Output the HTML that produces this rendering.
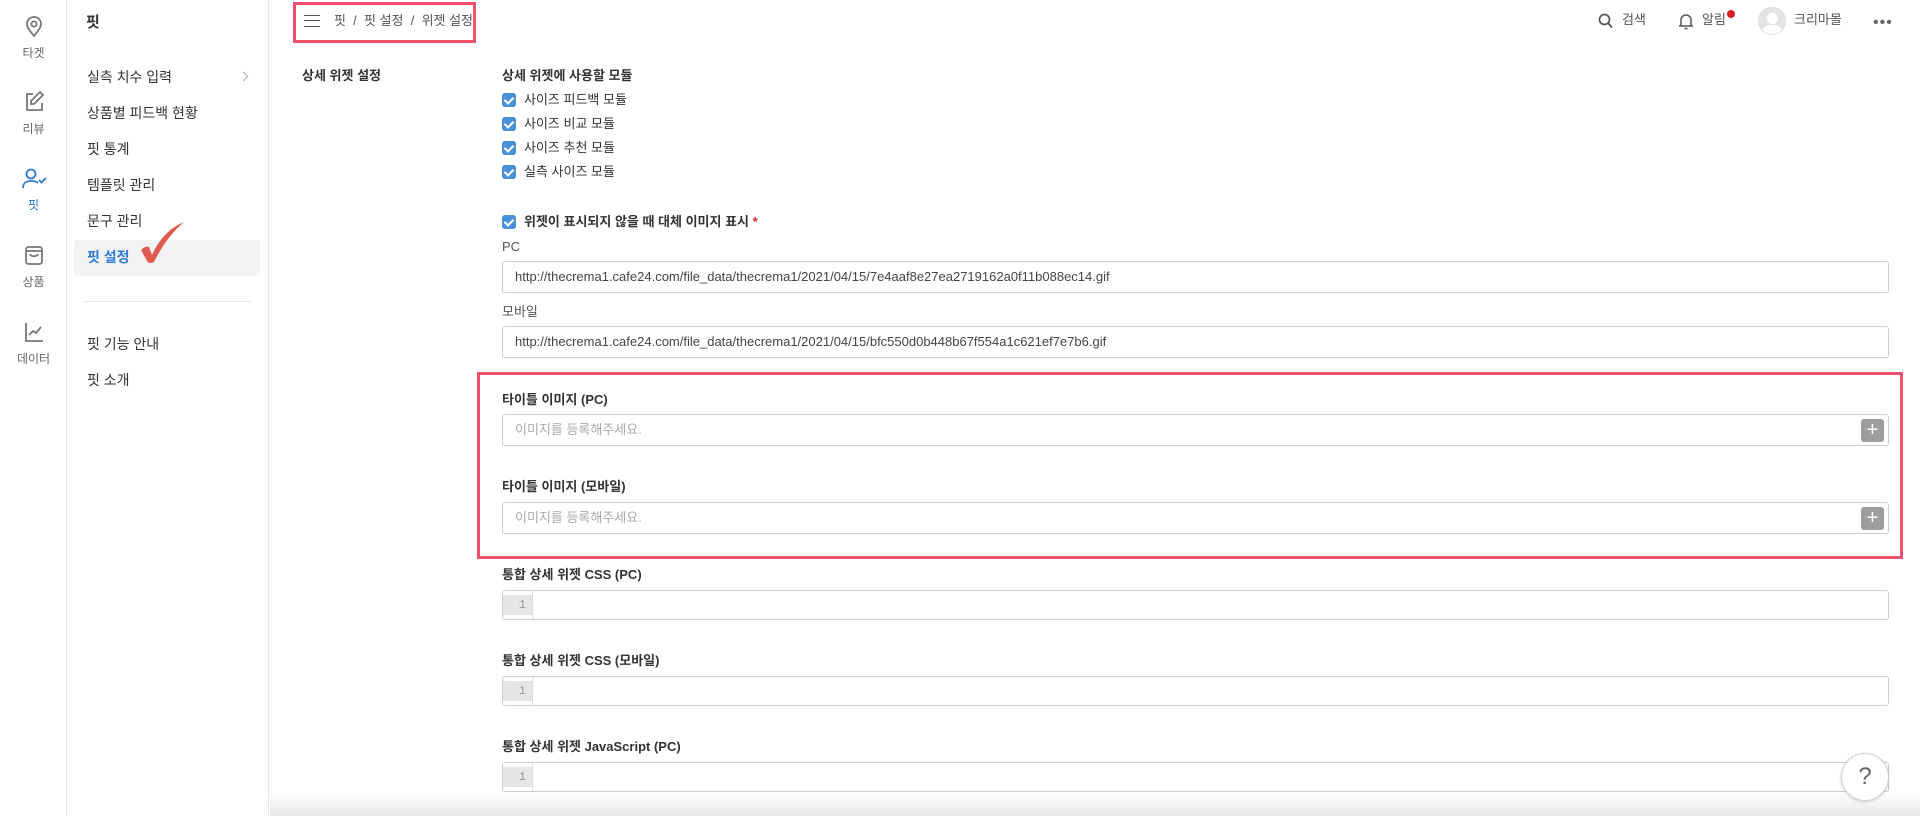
<!DOCTYPE html>
<html><head><meta charset="utf-8">
<style>
*{box-sizing:border-box;margin:0;padding:0}
body{width:1920px;height:816px;overflow:hidden;background:#fff;font-family:"Liberation Sans","Noto Sans CJK KR",sans-serif;color:#333;position:relative}
.abs{position:absolute}
.rail{left:0;top:0;width:67px;height:816px;border-right:1px solid #e8e8e8}
.ri{position:absolute;left:0;width:67px;text-align:center;font-size:12px;color:#666}
.ri svg{display:block;margin:0 auto 6px}
.side{left:67px;top:0;width:202px;height:816px;border-right:1px solid #e8e8e8}
.mi{position:absolute;left:20px;font-size:14px;color:#333;line-height:20px}
.t{position:absolute;font-size:13px;line-height:18px;white-space:nowrap}
.b{font-weight:bold;color:#333}
.cb{position:absolute;width:14px;height:14px;border-radius:3px;background:#4a8fd9}
.cb:after{content:"";position:absolute;left:4px;top:2px;width:4px;height:7px;border:solid #fff;border-width:0 2px 2px 0;transform:rotate(45deg)}
.inp{position:absolute;left:502px;width:1387px;border:1px solid #ccc;border-radius:3px;font-size:13px;padding-left:12px;color:#444;background:#fff}
.plus{position:absolute;right:4px;top:4px;width:23px;height:23px;background:#9e9e9e;border-radius:3px;color:#fff;font-size:20px;line-height:22px;text-align:center}
.code{position:absolute;left:502px;width:1387px;height:30px;border:1px solid #ccc;border-radius:3px;background:#fff}
.code .g{position:absolute;left:0;top:4px;width:29px;height:20px;background:#e6e6e6;color:#999;font-family:"Liberation Mono",monospace;font-size:12px;text-align:right;padding-right:6px;line-height:20px}
.code .gl{position:absolute;left:29px;top:0;bottom:0;border-left:1px solid #ddd}
</style></head><body>

<div class="abs rail">
 <div class="ri" style="top:14px"><svg width="22" height="24" viewBox="0 0 22 24" fill="none" stroke="#777" stroke-width="1.8"><path d="M11 22c-4-5-7-8.5-7-12a7 7 0 0 1 14 0c0 3.5-3 7-7 12z"/><circle cx="11" cy="10" r="2.6"/></svg>타겟</div>
 <div class="ri" style="top:90px"><svg width="22" height="24" viewBox="0 0 22 24" fill="none" stroke="#777" stroke-width="1.8"><path d="M10 4H4v16h15v-7"/><path d="M17 2l3 3-9 9H8v-3z"/></svg>리뷰</div>
 <div class="ri" style="top:168px;color:#2f7bd8"><svg width="26" height="22" viewBox="0 0 26 22" fill="none" stroke="#2f7bd8" stroke-width="1.8"><circle cx="10" cy="6" r="4.5"/><path d="M2 20c0-5 3.5-7 8-7s6 1 7 2"/><path d="M18 12l2.5 2.5L25 10"/></svg>핏</div>
 <div class="ri" style="top:243px"><svg width="22" height="24" viewBox="0 0 22 24" fill="none" stroke="#777" stroke-width="1.8"><rect x="3" y="4" width="16" height="17" rx="2.5"/><path d="M3 8h16M7 11c1 3 7 3 8 0"/></svg>상품</div>
 <div class="ri" style="top:320px"><svg width="22" height="24" viewBox="0 0 22 24" fill="none" stroke="#777" stroke-width="1.8"><path d="M3 3v18h17"/><path d="M6 15l4-4 3 2 5-6"/></svg>데이터</div>
</div>

<div class="abs side">
 <div class="mi" style="left:19px;top:13px;font-weight:bold;font-size:15px">핏</div>
 <div class="mi" style="top:67px">실측 치수 입력</div>
 <div class="abs" style="left:173px;top:73px;width:7px;height:7px;border-top:1px solid #aaa;border-right:1px solid #aaa;transform:rotate(45deg)"></div>
 <div class="mi" style="top:103px">상품별 피드백 현황</div>
 <div class="mi" style="top:139px">핏 통계</div>
 <div class="mi" style="top:175px">템플릿 관리</div>
 <div class="mi" style="top:211px">문구 관리</div>
 <div class="abs" style="left:7px;top:240px;width:186px;height:36px;background:#f2f3f5;border-radius:4px"></div>
 <div class="mi" style="top:247px;color:#2f7bd8;font-weight:bold">핏 설정</div>
 <svg class="abs" style="left:72px;top:220px" width="48" height="46" viewBox="0 0 48 46"><path d="M2 30c3-3 6-4 8-3l3 8C20 20 30 8 45 2c-12 10-22 24-30 40-3 2-6 1-7-1z" fill="#e05a52"/></svg>
 <div class="abs" style="left:17px;top:301px;width:167px;border-top:1px solid #e6e6e6"></div>
 <div class="mi" style="top:334px">핏 기능 안내</div>
 <div class="mi" style="top:370px">핏 소개</div>
</div>

<!-- header -->
<div class="abs" style="left:293px;top:2px;width:183px;height:41px;border:3px solid #f0506e"></div>
<div class="abs" style="left:304px;top:15px;width:16px;height:12px;border-top:1.5px solid #555;border-bottom:1.5px solid #555"></div>
<div class="abs" style="left:304px;top:20px;width:16px;border-top:1.5px solid #555"></div>
<div class="t" style="left:334px;top:12px;color:#555">핏 &nbsp;/ &nbsp;핏 설정 &nbsp;/ &nbsp;위젯 설정</div>

<svg class="abs" style="left:1598px;top:13px" width="15" height="16" viewBox="0 0 15 16" fill="none" stroke="#555" stroke-width="1.7"><circle cx="6.5" cy="6.5" r="5"/><path d="M10 10l4 4.5"/></svg>
<div class="t" style="left:1622px;top:11px;color:#555">검색</div>
<svg class="abs" style="left:1678px;top:12px" width="16" height="18" viewBox="0 0 16 18" fill="none" stroke="#555" stroke-width="1.5"><path d="M3 14V8a5 5 0 0 1 10 0v6zM1 14h14M6.5 16.5h3"/></svg>
<div class="t" style="left:1702px;top:11px;color:#555">알림</div>
<div class="abs" style="left:1727px;top:10px;width:8px;height:8px;border-radius:50%;background:#d9202a"></div>
<div class="abs" style="left:1758px;top:7px;width:28px;height:28px;border-radius:50%;background:#e4e4e4;border:1px solid #ddd;overflow:hidden"><div class="abs" style="left:8px;top:5px;width:11px;height:11px;border-radius:50%;background:#fff"></div><div class="abs" style="left:3px;top:17px;width:21px;height:14px;border-radius:50%;background:#fff"></div></div>
<div class="t" style="left:1794px;top:11px;color:#555">크리마몰</div>
<div class="t" style="left:1873px;top:14px;color:#666;font-size:16px;letter-spacing:1px">•••</div>

<!-- content -->
<div class="t b" style="left:302px;top:67px">상세 위젯 설정</div>
<div class="t b" style="left:502px;top:67px">상세 위젯에 사용할 모듈</div>
<div class="cb" style="left:502px;top:93px"></div><div class="t" style="left:524px;top:91px">사이즈 피드백 모듈</div>
<div class="cb" style="left:502px;top:117px"></div><div class="t" style="left:524px;top:115px">사이즈 비교 모듈</div>
<div class="cb" style="left:502px;top:141px"></div><div class="t" style="left:524px;top:139px">사이즈 추천 모듈</div>
<div class="cb" style="left:502px;top:165px"></div><div class="t" style="left:524px;top:163px">실측 사이즈 모듈</div>

<div class="cb" style="left:502px;top:215px"></div><div class="t b" style="left:524px;top:213px">위젯이 표시되지 않을 때 대체 이미지 표시 <span style="color:#d9202a">*</span></div>
<div class="t" style="left:502px;top:238px;color:#555">PC</div>
<div class="inp" style="top:261px;height:32px;line-height:30px">http://thecrema1.cafe24.com/file_data/thecrema1/2021/04/15/7e4aaf8e27ea2719162a0f11b088ec14.gif</div>
<div class="t" style="left:502px;top:303px;color:#555">모바일</div>
<div class="inp" style="top:326px;height:32px;line-height:30px">http://thecrema1.cafe24.com/file_data/thecrema1/2021/04/15/bfc550d0b448b67f554a1c621ef7e7b6.gif</div>

<div class="abs" style="left:477px;top:372px;width:1426px;height:187px;border:3px solid #f0506e"></div>
<div class="t b" style="left:502px;top:391px">타이틀 이미지 (PC)</div>
<div class="inp" style="top:414px;height:32px;line-height:30px;color:#aaa">이미지를 등록해주세요.<div class="plus">+</div></div>
<div class="t b" style="left:502px;top:478px">타이틀 이미지 (모바일)</div>
<div class="inp" style="top:502px;height:32px;line-height:30px;color:#aaa">이미지를 등록해주세요.<div class="plus">+</div></div>

<div class="t b" style="left:502px;top:566px">통합 상세 위젯 CSS (PC)</div>
<div class="code" style="top:590px"><div class="g">1</div><div class="gl"></div></div>
<div class="t b" style="left:502px;top:652px">통합 상세 위젯 CSS (모바일)</div>
<div class="code" style="top:676px"><div class="g">1</div><div class="gl"></div></div>
<div class="t b" style="left:502px;top:738px">통합 상세 위젯 JavaScript (PC)</div>
<div class="code" style="top:762px"><div class="g">1</div><div class="gl"></div></div>

<div class="abs" style="left:270px;top:792px;width:1650px;height:24px;background:linear-gradient(to bottom,rgba(232,232,232,0),#e8e8e8);"></div>
<div class="abs" style="left:1841px;top:753px;width:48px;height:48px;border-radius:50%;background:#fff;border:1px solid #d0d0d0;box-shadow:0 1px 3px rgba(0,0,0,.15);text-align:center;line-height:46px;font-size:24px;color:#666">?</div>
</body></html>
